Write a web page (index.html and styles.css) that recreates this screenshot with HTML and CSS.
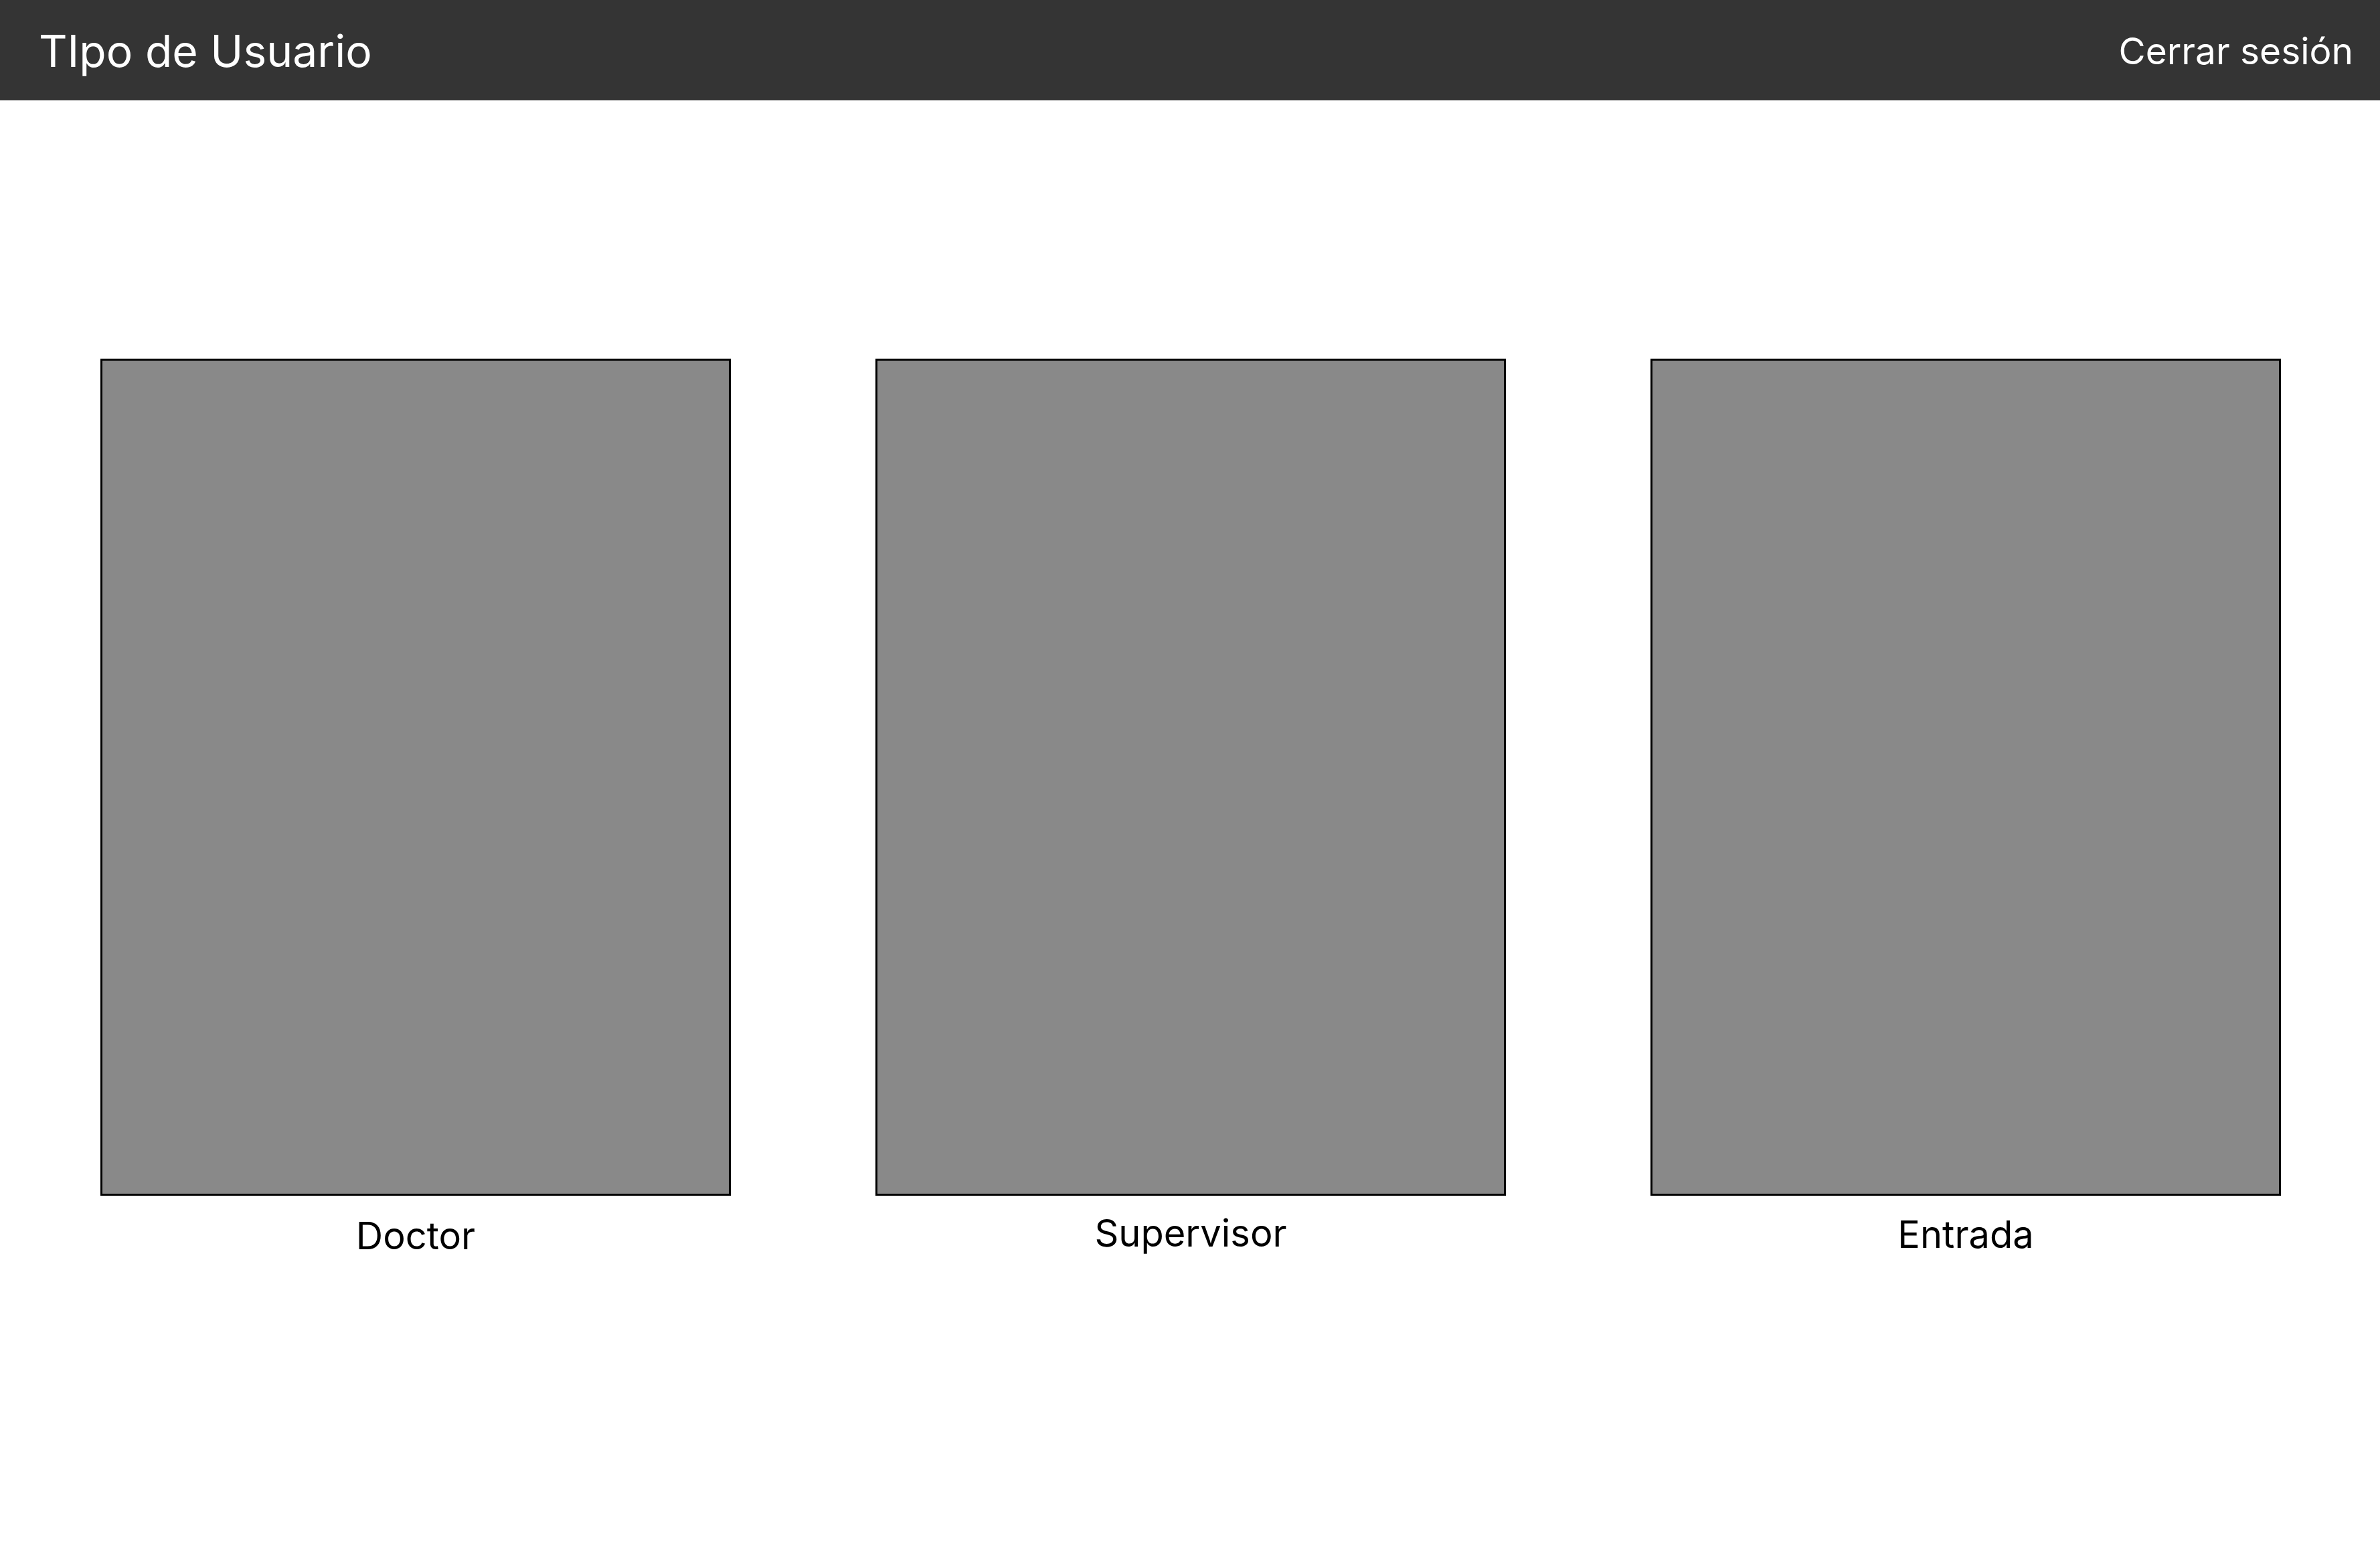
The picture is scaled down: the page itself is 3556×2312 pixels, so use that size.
FILE: index.html
```html
<!DOCTYPE html>
<html lang="es">
<head>
<meta charset="utf-8">
<title>TIpo de Usuario</title>
<link rel="stylesheet" href="styles.css">
</head>
<body>
<header class="topbar">
  <h1 class="title">TIpo de Usuario</h1>
  <a class="logout" href="#">Cerrar sesión</a>
</header>
<main class="choices">
  <div class="choice">
    <div class="picture"></div>
    <div class="label">Doctor</div>
  </div>
  <div class="choice">
    <div class="picture"></div>
    <div class="label label-up">Supervisor</div>
  </div>
  <div class="choice">
    <div class="picture"></div>
    <div class="label label-mid">Entrada</div>
  </div>
</main>
</body>
</html>
```

FILE: styles.css
```css
html, body {
  margin: 0;
  padding: 0;
  background: #ffffff;
  font-family: Inter, "Noto Sans", "Liberation Sans", sans-serif;
}

.topbar {
  height: 150px;
  background: #343434;
  display: flex;
  align-items: center;
  justify-content: space-between;
  padding: 0 40px 0 58px;
  box-sizing: border-box;
}

.title {
  margin: 0;
  font-size: 66px;
  font-weight: 400;
  color: #ffffff;
  line-height: 1;
  padding-top: 2px;
}

.logout {
  color: #ffffff;
  text-decoration: none;
  font-size: 55px;
  font-weight: 400;
  line-height: 1;
  padding-top: 2px;
}

.choices {
  display: flex;
  gap: 216px;
  padding: 386px 147px 0 150px;
}

.choice {
  width: 942px;
  display: flex;
  flex-direction: column;
  align-items: center;
}

.picture {
  width: 942px;
  height: 1251px;
  box-sizing: border-box;
  background: #898989;
  border: 3px solid #000000;
}

.label {
  margin-top: 26px;
  font-size: 56px;
  color: #000000;
  line-height: 68px;
}

.label-up {
  margin-top: 22px;
}

.label-mid {
  margin-top: 24px;
}
```
